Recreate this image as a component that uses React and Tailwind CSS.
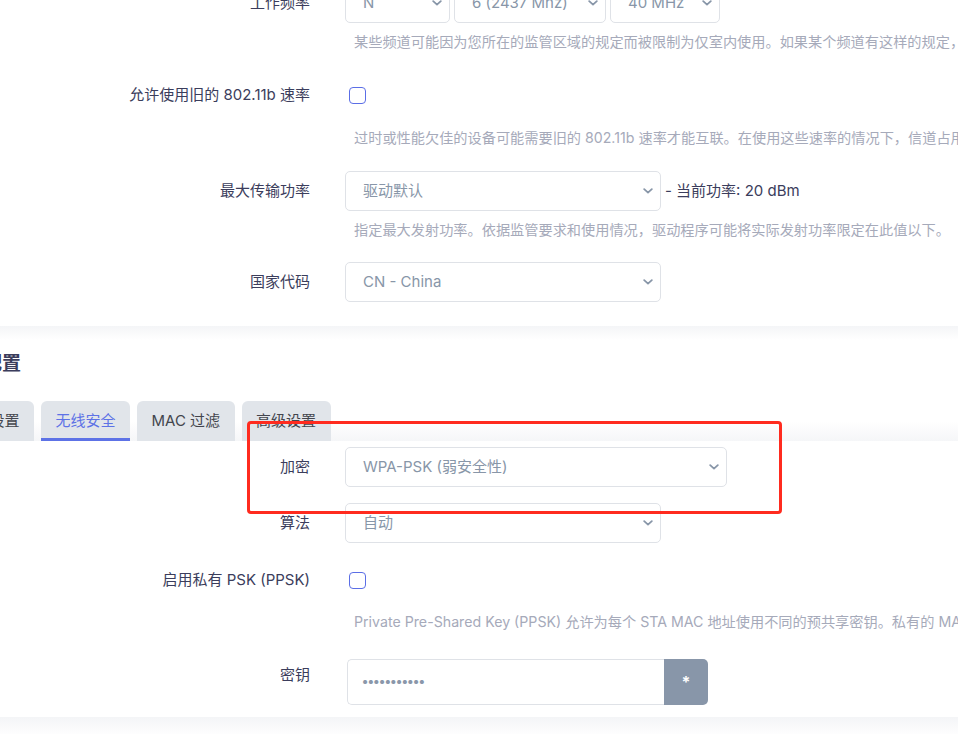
import React from "react";

// ----------------------------- small pieces -----------------------------|

function Chevron() {
  return (
    <svg width="10" height="6" viewBox="0 0 10 6" className="absolute right-[7px] top-1/2 -translate-y-1/2">
      <polyline points="1.2,1.2 5,4.6 8.8,1.2" fill="none" stroke="#8896a8" strokeWidth="1.8" strokeLinecap="round" strokeLinejoin="round" />
    </svg>
  );
}

function Select({ value, width }) {
  return (
    <div className={`relative h-10 shrink-0 border border-[#dfe2e7] rounded-[5px] bg-white flex items-center pl-[17px] text-[15px] text-[#8896a8] ${width}`}>
      {value}
      <Chevron />
    </div>
  );
}

function Checkbox() {
  return <div className="ml-[4px] w-[17px] h-[17px] border-[1.5px] border-[#5b6ee6] rounded-[4px] bg-white" />;
}

function Row({ label, help, className = "", helpClass = "mt-[9px]", children }) {
  return (
    <div className={`flex ${className}`}>
      <div className="w-[365px] shrink-0 h-10 flex items-center justify-end text-[15px] text-[#3b3d5c] whitespace-nowrap">
        {label}
      </div>
      <div className="ml-[35px] flex-1 min-w-0">
        <div className="flex items-center h-10 gap-[4px]">{children}</div>
        {help && (
          <p className={`pl-[9px] text-[14.2px] leading-5 text-[#a6aaba] whitespace-nowrap ${helpClass}`}>{help}</p>
        )}
      </div>
    </div>
  );
}

function Tab({ children, active }) {
  return (
    <div
      className={`h-10 px-[14.5px] flex items-center rounded-t-[6px] bg-[#e1e5ea] text-[15px] whitespace-nowrap ${
        active ? "text-[#5d72e6] border-b-[3px] border-[#5d72e6] pt-[3px]" : "text-[#43454d]"
      }`}
    >
      {children}
    </div>
  );
}

// ----------------------------- page -----------------------------|

export default function App() {
  return (
    <div className="relative w-[958px] h-[734px] overflow-hidden bg-white font-['Inter','Noto_Sans_CJK_SC',sans-serif]">
      <div className="w-[1100px] -ml-[55px] -mt-[17px]">
        {/* device card */}
        <div className="pb-[24px]">
          <Row label="工作频率" help="某些频道可能因为您所在的监管区域的规定而被限制为仅室内使用。如果某个频道有这样的规定，请在室外使用时选择其他频道。">
            <Select value="N" width="w-[105px]" />
            <Select value="6 (2437 Mhz)" width="w-[152px]" />
            <Select value="40 MHz" width="w-[110px]" />
          </Row>
          <Row
            className="mt-[23px]"
            helpClass="mt-[13px]"
            label="允许使用旧的 802.11b 速率"
            help="过时或性能欠佳的设备可能需要旧的 802.11b 速率才能互联。在使用这些速率的情况下，信道占用时间会增加。"
          >
            <Checkbox />
          </Row>
          <Row
            className="mt-[23px]"
            label="最大传输功率"
            help="指定最大发射功率。依据监管要求和使用情况，驱动程序可能将实际发射功率限定在此值以下。"
          >
            <Select value="驱动默认" width="w-[316px]" />
            <span className="text-[15px] text-[#3b3d5c] whitespace-nowrap">- 当前功率: 20 dBm</span>
          </Row>
          <Row className="mt-[22px]" label="国家代码">
            <Select value="CN - China" width="w-[316px]" />
          </Row>
        </div>

        <div className="h-[14px] bg-gradient-to-b from-[#f4f5f7] to-white" />

        {/* interface card */}
        <h2 className="mt-[10px] h-[28px] leading-[28px] text-[19px] font-bold text-[#3b3d5c]">接口配置</h2>

        <div className="mt-[23px] flex gap-[7px] bg-gradient-to-b from-white via-white to-[#f5f6f8]">
          <Tab>常规设置</Tab>
          <Tab active>无线安全</Tab>
          <Tab>MAC 过滤</Tab>
          <Tab>高级设置</Tab>
        </div>

        <div className="pt-[6px] pb-[12px]">
          <Row label="加密">
            <Select value="WPA-PSK (弱安全性)" width="w-[382px]" />
          </Row>
          <Row className="mt-[16px]" label="算法">
            <Select value="自动" width="w-[316px]" />
          </Row>
          <Row
            className="mt-[17px]"
            helpClass="mt-[12px]"
            label="启用私有 PSK (PPSK)"
            help="Private Pre-Shared Key (PPSK) 允许为每个 STA MAC 地址使用不同的预共享密钥。私有的 MAC 地址必须是唯一的。"
          >
            <Checkbox />
          </Row>
          <div className="flex mt-[23px]">
            <div className="w-[365px] shrink-0 h-10 flex items-center justify-end text-[15px] text-[#3b3d5c]">密钥</div>
            <div className="ml-[37px] mt-[4px] flex h-[46px]">
              <div className="w-[317px] border border-r-0 border-[#dfe2e7] rounded-l-[5px] flex items-center pl-[14px] text-[13px] font-bold tracking-[-0.5px] text-[#8a97aa]">
                •••••••••••
              </div>
              <div className="w-[44px] bg-[#8896a9] rounded-r-[5px] flex items-center justify-center text-white text-[16px] font-bold">
                *
              </div>
            </div>
          </div>
        </div>

        <div className="h-[20px] bg-gradient-to-b from-[#f4f5f7] to-white" />
      </div>

      {/* red annotation box */}
      <div className="absolute left-[247px] top-[421px] w-[535px] h-[93px] border-[3px] border-[#ff2b1f] rounded-[4px]" />
    </div>
  );
}
